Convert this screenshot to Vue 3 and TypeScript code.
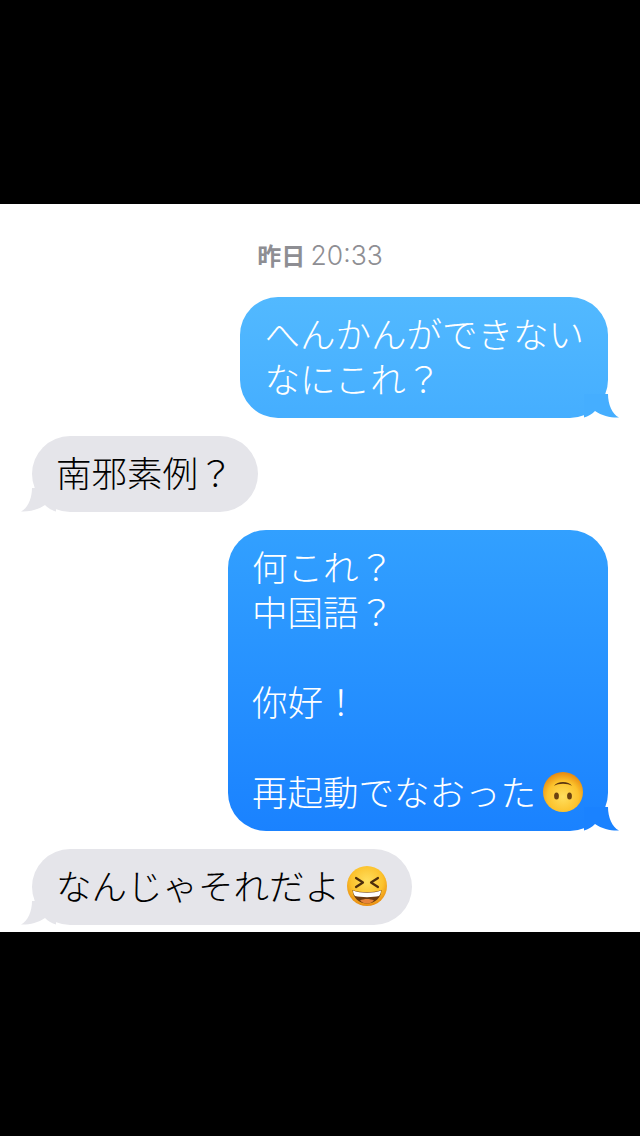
<script setup lang="ts">
</script>

<template>
  <div class="page">
    <div class="band"></div>
    <main class="screen">
      <div class="stamp"><b>昨日</b> <span>20:33</span></div>
      <div class="bubble out b1">
        へんかんができない<br />なにこれ？
        <svg class="tail tail-r" width="35" height="24" viewBox="0 0 35 24"><path d="M0 0 L24 0 C24 10 28 20 35 23.5 C28 24 18 22 11 17 C8 20 4 22.5 0 23.5 Z" fill="#45aeff" /></svg>
      </div>
      <div class="bubble in">
        南邪素例？
        <svg class="tail tail-l" width="35" height="24" viewBox="0 0 35 24"><path d="M35 0 L11 0 C11 10 7 20 0 23.5 C7 24 17 22 24 17 C27 20 31 22.5 35 23.5 Z" fill="#e5e5ea" /></svg>
      </div>
      <div class="bubble out b2">
        何これ？<br />中国語？<br /><br />你好！<br /><br />再起動でなおった<svg class="emoji" width="42" height="42" viewBox="0 0 42 42">
          <defs>
            <radialGradient id="face1" cx="50%" cy="62%" r="60%">
              <stop offset="0%" stop-color="#ffdf5e" />
              <stop offset="65%" stop-color="#fcc22c" />
              <stop offset="100%" stop-color="#e88c12" />
            </radialGradient>
          </defs>
          <circle cx="21" cy="21" r="20" fill="url(#face1)" />
          <path d="M12 15 C15 9.5 27 9.5 30 15 C26 12 16 12 12 15 Z" fill="#5a3410" />
          <ellipse cx="14.5" cy="25" rx="2.4" ry="3.6" fill="#6b4210" />
          <ellipse cx="27.5" cy="25" rx="2.4" ry="3.6" fill="#6b4210" />
        </svg>
        <svg class="tail tail-r" width="35" height="24" viewBox="0 0 35 24"><path d="M0 0 L24 0 C24 10 28 20 35 23.5 C28 24 18 22 11 17 C8 20 4 22.5 0 23.5 Z" fill="#1a82ff" /></svg>
      </div>
      <div class="bubble in">
        なんじゃそれだよ<svg class="emoji" width="42" height="42" viewBox="0 0 42 42">
          <defs>
            <radialGradient id="face2" cx="50%" cy="38%" r="62%">
              <stop offset="0%" stop-color="#ffdf5e" />
              <stop offset="65%" stop-color="#fcc22c" />
              <stop offset="100%" stop-color="#e88c12" />
            </radialGradient>
          </defs>
          <circle cx="21" cy="21" r="20" fill="url(#face2)" />
          <path d="M10 13 L17 17.5 L10 22" fill="none" stroke="#4e2e0c" stroke-width="2.2" stroke-linecap="round" stroke-linejoin="round" />
          <path d="M32 13 L25 17.5 L32 22" fill="none" stroke="#4e2e0c" stroke-width="2.2" stroke-linecap="round" stroke-linejoin="round" />
          <path d="M6.500 25 C14 28 28 28 35.500 25 C35 33 29 38.500 21 38.500 C13 38.500 7 33 6.500 25 Z" fill="#6b3a10" />
          <path d="M7 25.500 C14 28.500 28 28.500 35 25.500 C35 28 34 30 33 31 C27 32.500 15 32.500 9 31 C8 30 7 28 7 25.500 Z" fill="#fff" />
          <path d="M14 35.500 C18 33.500 24 33.500 28 35.500 C26 37.500 24 38.500 21 38.500 C18 38.500 16 37.500 14 35.500 Z" fill="#e8843c" />
        </svg>
        <svg class="tail tail-l" width="35" height="24" viewBox="0 0 35 24"><path d="M35 0 L11 0 C11 10 7 20 0 23.5 C7 24 17 22 24 17 C27 20 31 22.5 35 23.5 Z" fill="#e5e5ea" /></svg>
      </div>
    </main>
    <div class="band rest"></div>
  </div>
</template>

<style>
html, body { margin: 0; background: #000; }
</style>

<style scoped>
.page {
  width: 640px;
  height: 1136px;
  display: flex;
  flex-direction: column;
  background: #000;
  overflow: hidden;
  font-family: "Noto Sans CJK JP", "Noto Sans", sans-serif;
}
.band { height: 204px; flex: none; background: #000; }
.band.rest { flex: 1; }
.screen {
  flex: none;
  height: 728px;
  box-sizing: border-box;
  background: #fff;
  padding: 34px 32px 0;
  display: flex;
  flex-direction: column;
  gap: 18px;
  overflow: hidden;
}
.stamp {
  text-align: center;
  color: #8e8e93;
  font-size: 24px;
  line-height: 34px;
  margin-bottom: 7px;
}
.stamp b { font-weight: 700; }
.stamp span { font-family: "Inter", sans-serif; font-size: 26.5px; font-weight: 300; }
.bubble {
  position: relative;
  width: fit-content;
  box-sizing: border-box;
  padding: 13px 24px 18px;
  border-radius: 38px;
  font-size: 35.5px;
  font-weight: 300;
  line-height: 45px;
}
.emoji {
  display: inline-block;
  vertical-align: -7px;
  margin-left: 6px;
}
.out { align-self: flex-end; color: #fff; }
.in { align-self: flex-start; color: #000; background: #e5e5ea; }
.b1 { background: linear-gradient(#52b9ff, #45aeff); }
.b2 { background: linear-gradient(#32a0ff, #1a82ff); }
.tail { position: absolute; bottom: 0; }
.tail-r { right: -11px; }
.tail-l { left: -11px; }
</style>
